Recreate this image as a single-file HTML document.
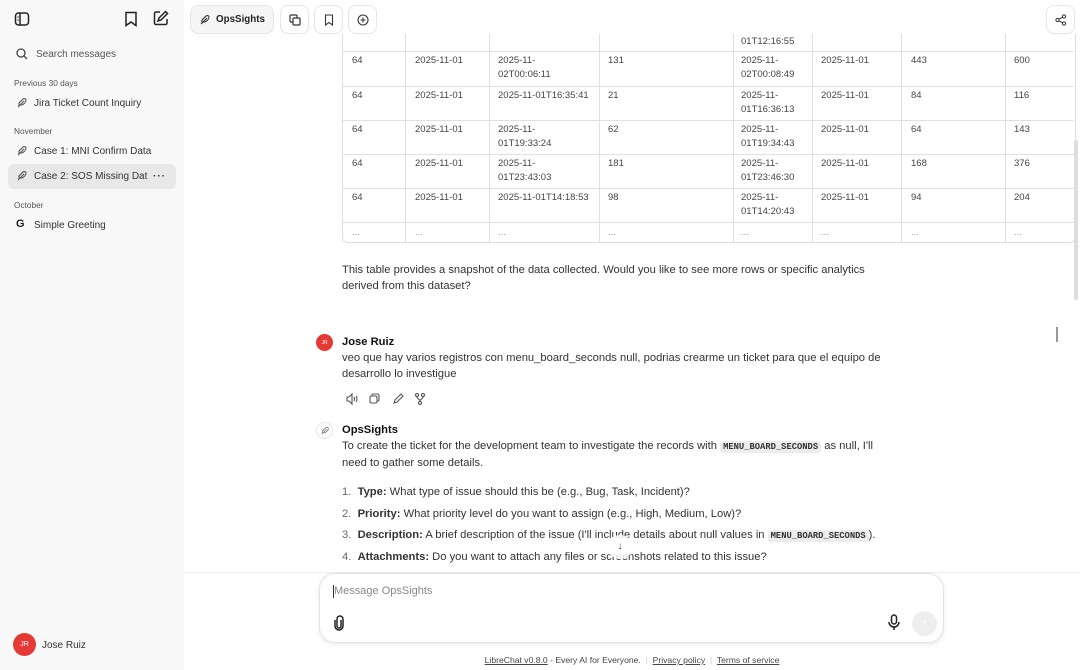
<!DOCTYPE html>
<html><head><meta charset="utf-8"><style>
*{box-sizing:border-box;margin:0;padding:0}
body{width:1080px;height:670px;overflow:hidden;background:#fff;font-family:"Liberation Sans",sans-serif;color:#222;position:relative}
.abs{position:absolute}
#side{left:0;top:0;width:184px;height:670px;background:#f8f8f8}
.lbl{font-size:8.3px;color:#555;position:absolute;left:14px}
.item{position:absolute;left:8px;width:168px;height:25px;font-size:10px;color:#333;display:flex;align-items:center;padding-left:26px;border-radius:6px;white-space:nowrap;overflow:hidden}
.ic{position:absolute;left:8px;top:6px}
.btn{position:absolute;top:5px;height:29px;border:1px solid #e5e5e5;border-radius:8px;background:#fff;display:flex;align-items:center;justify-content:center}
.vl{position:absolute;width:1px;background:#e0e0e0;top:34px;height:208px}
.hl{position:absolute;height:1px;background:#e0e0e0;left:342px;width:732px}
.c{position:absolute;font-size:9.5px;color:#444;line-height:14px}
.t{font-size:11.2px;color:#333;line-height:16px}
code{font-family:"Liberation Mono",monospace;font-size:8.8px;background:#ececec;border-radius:3px;padding:1px 3px;font-weight:bold;color:#333}
</style></head><body>
<div id="side" class="abs">
<svg class="abs" style="left:14px;top:11px" width="16" height="16" viewBox="0 0 16 16" fill="none" stroke="#222" stroke-width="1.5"><rect x="1.5" y="2" width="13" height="12" rx="3"/><line x1="6" y1="2" x2="6" y2="14"/><line x1="3.5" y1="6" x2="4.5" y2="6"/><line x1="3.5" y1="9" x2="4.5" y2="9"/></svg>
<svg class="abs" style="left:124px;top:11px" width="14" height="16" viewBox="0 0 14 16" fill="none" stroke="#222" stroke-width="1.5"><path d="M2 1.5h10v13l-5-3.5-5 3.5z"/></svg>
<svg class="abs" style="left:153px;top:10px" width="16" height="16" viewBox="0 0 16 16" fill="none" stroke="#222" stroke-width="1.5"><path d="M7 2H3a1.5 1.5 0 0 0-1.5 1.5v9.5A1.5 1.5 0 0 0 3 14.5h9.5A1.5 1.5 0 0 0 14 13V9"/><path d="M12.5 1.5l2 2L8 10l-3 1 1-3z"/></svg>
<svg class="abs" style="left:16px;top:48px" width="12" height="12" viewBox="0 0 12 12" fill="none" stroke="#444" stroke-width="1.3"><circle cx="5" cy="5" r="4"/><line x1="8" y1="8" x2="11" y2="11"/></svg>
<div class="abs" style="left:36px;top:49px;font-size:10px;color:#555">Search messages</div>
<div class="lbl" style="top:78px">Previous 30 days</div>
<div class="item" style="top:91px"><svg class="ic" width="12" height="12" viewBox="0 0 12 12" fill="none" stroke="#555" stroke-width="1.1"><path d="M2 10L8 4M3 9V6l4-4c2-1 3 0 3 1 0 2-2 4-4 5H3"/></svg>Jira Ticket Count Inquiry</div>
<div class="lbl" style="top:126px">November</div>
<div class="item" style="top:139px"><svg class="ic" width="12" height="12" viewBox="0 0 12 12" fill="none" stroke="#555" stroke-width="1.1"><path d="M2 10L8 4M3 9V6l4-4c2-1 3 0 3 1 0 2-2 4-4 5H3"/></svg>Case 1: MNI Confirm Data</div>
<div class="item" style="top:164px;background:#e8e8e8"><svg class="ic" width="12" height="12" viewBox="0 0 12 12" fill="none" stroke="#555" stroke-width="1.1"><path d="M2 10L8 4M3 9V6l4-4c2-1 3 0 3 1 0 2-2 4-4 5H3"/></svg>Case 2: SOS Missing Dat<span style="position:absolute;right:10px;font-weight:bold;letter-spacing:1px;background:#e8e8e8;padding-left:4px">···</span></div>
<div class="lbl" style="top:200px">October</div>
<div class="item" style="top:213px"><span class="ic" style="top:5px;left:8px;font-weight:bold;font-size:11px;color:#222">G</span>Simple Greeting</div>
<div class="abs" style="left:13px;top:633px;width:23px;height:23px;border-radius:50%;background:#e53935;color:#fff;font-size:7px;display:flex;align-items:center;justify-content:center">JR</div>
<div class="abs" style="left:42px;top:640px;font-size:10px;color:#333">Jose Ruiz</div>
</div>
<div class="abs" style="left:184px;top:630px;width:28px;height:18px;background:#f7f7f7"></div>

<div class="btn" style="left:190px;width:84px;background:#f5f5f5"><svg width="12" height="12" viewBox="0 0 12 12" fill="none" stroke="#333" stroke-width="1.1"><path d="M2 10L8 4M3 9V6l4-4c2-1 3 0 3 1 0 2-2 4-4 5H3"/></svg><span style="font-size:9.8px;font-weight:bold;margin-left:5px">OpsSights</span></div>
<div class="btn" style="left:280px;width:29px"><svg width="12" height="12" viewBox="0 0 12 12" fill="none" stroke="#333" stroke-width="1.2"><rect x="1" y="1" width="7" height="7" rx="1"/><rect x="4" y="4" width="7" height="7" rx="1" fill="#fff"/></svg></div>
<div class="btn" style="left:314px;width:29px"><svg width="10" height="12" viewBox="0 0 10 12" fill="none" stroke="#333" stroke-width="1.1"><path d="M1.5 1h7v10l-3.5-2.5-3.5 2.5z"/></svg></div>
<div class="btn" style="left:348px;width:29px"><svg width="12" height="12" viewBox="0 0 12 12" fill="none" stroke="#333" stroke-width="1.1"><circle cx="6" cy="6" r="5"/><path d="M6 3.5v5M3.5 6h5"/></svg></div>
<div class="btn" style="left:1046px;width:29px"><svg width="12" height="12" viewBox="0 0 12 12" fill="none" stroke="#333" stroke-width="1"><circle cx="9" cy="2.5" r="1.6"/><circle cx="2.5" cy="6" r="1.6"/><circle cx="9" cy="9.5" r="1.6"/><path d="M4 5.2l3.6-2M4 6.8l3.6 2"/></svg></div>

<!-- table -->
<div class="abs" style="left:342px;top:34px;width:734px;height:209px;border:1px solid #ddd;border-top:none;border-radius:0 0 6px 6px"></div>
<div class="vl" style="left:405px"></div><div class="vl" style="left:489px"></div><div class="vl" style="left:599px"></div><div class="vl" style="left:733px"></div><div class="vl" style="left:812px"></div><div class="vl" style="left:901px"></div><div class="vl" style="left:1005px"></div>
<div class="hl" style="top:51px"></div><div class="hl" style="top:86px"></div><div class="hl" style="top:120px"></div><div class="hl" style="top:154px"></div><div class="hl" style="top:188px"></div><div class="hl" style="top:222px"></div>
<div class="c" style="left:741px;top:35px">01T12:16:55</div>
<div class="c" style="left:352px;top:54px">64</div><div class="c" style="left:415px;top:54px">2025-11-01</div><div class="c" style="left:498px;top:54px">2025-11-<br>02T00:06:11</div><div class="c" style="left:608px;top:54px">131</div><div class="c" style="left:741px;top:54px">2025-11-<br>02T00:08:49</div><div class="c" style="left:821px;top:54px">2025-11-01</div><div class="c" style="left:911px;top:54px">443</div><div class="c" style="left:1014px;top:54px">600</div>
<div class="c" style="left:352px;top:89px">64</div><div class="c" style="left:415px;top:89px">2025-11-01</div><div class="c" style="left:498px;top:89px">2025-11-01T16:35:41</div><div class="c" style="left:608px;top:89px">21</div><div class="c" style="left:741px;top:89px">2025-11-<br>01T16:36:13</div><div class="c" style="left:821px;top:89px">2025-11-01</div><div class="c" style="left:911px;top:89px">84</div><div class="c" style="left:1014px;top:89px">116</div>
<div class="c" style="left:352px;top:123px">64</div><div class="c" style="left:415px;top:123px">2025-11-01</div><div class="c" style="left:498px;top:123px">2025-11-<br>01T19:33:24</div><div class="c" style="left:608px;top:123px">62</div><div class="c" style="left:741px;top:123px">2025-11-<br>01T19:34:43</div><div class="c" style="left:821px;top:123px">2025-11-01</div><div class="c" style="left:911px;top:123px">64</div><div class="c" style="left:1014px;top:123px">143</div>
<div class="c" style="left:352px;top:157px">64</div><div class="c" style="left:415px;top:157px">2025-11-01</div><div class="c" style="left:498px;top:157px">2025-11-<br>01T23:43:03</div><div class="c" style="left:608px;top:157px">181</div><div class="c" style="left:741px;top:157px">2025-11-<br>01T23:46:30</div><div class="c" style="left:821px;top:157px">2025-11-01</div><div class="c" style="left:911px;top:157px">168</div><div class="c" style="left:1014px;top:157px">376</div>
<div class="c" style="left:352px;top:191px">64</div><div class="c" style="left:415px;top:191px">2025-11-01</div><div class="c" style="left:498px;top:191px">2025-11-01T14:18:53</div><div class="c" style="left:608px;top:191px">98</div><div class="c" style="left:741px;top:191px">2025-11-<br>01T14:20:43</div><div class="c" style="left:821px;top:191px">2025-11-01</div><div class="c" style="left:911px;top:191px">94</div><div class="c" style="left:1014px;top:191px">204</div>
<div class="c" style="left:352px;top:226px;color:#999">...</div><div class="c" style="left:415px;top:226px;color:#999">...</div><div class="c" style="left:498px;top:226px;color:#999">...</div><div class="c" style="left:608px;top:226px;color:#999">...</div><div class="c" style="left:741px;top:226px;color:#999">...</div><div class="c" style="left:821px;top:226px;color:#999">...</div><div class="c" style="left:911px;top:226px;color:#999">...</div><div class="c" style="left:1014px;top:226px;color:#999">...</div>
<div class="abs" style="left:1074px;top:140px;width:4px;height:160px;background:#ddd;border-radius:2px"></div>
<div class="abs" style="left:1056px;top:327px;width:2px;height:15px;background:#999"></div>

<div class="abs t" style="left:342px;top:262px;width:550px">This table provides a snapshot of the data collected. Would you like to see more rows or specific analytics derived from this dataset?</div>

<div class="abs" style="left:316px;top:334px;width:17px;height:17px;border-radius:50%;background:#e53935;color:#fff;font-size:5px;display:flex;align-items:center;justify-content:center">JR</div>
<div class="abs t" style="left:342px;top:334px;font-weight:bold;color:#111">Jose Ruiz</div>
<div class="abs t" style="left:342px;top:350px;width:556px">veo que hay varios registros con menu_board_seconds null, podrias crearme un ticket para que el equipo de desarrollo lo investigue</div>
<svg class="abs" style="left:345px;top:392px" width="90" height="14" viewBox="0 0 90 14" fill="none" stroke="#555" stroke-width="1.1"><path d="M2 5h2l3-3v10l-3-3H2zM9 5q1 2 0 4M11 4q2 3 0 6"/><rect x="25" y="4" width="7" height="7" rx="1.5"/><path d="M27 4V3a1 1 0 0 1 1-1h5a1 1 0 0 1 1 1v5a1 1 0 0 1-1 1h-1"/><path d="M49 11l1-3 6-6 2 2-6 6z"/><circle cx="72" cy="3" r="1.5"/><circle cx="78" cy="3" r="1.5"/><circle cx="75" cy="11" r="1.5"/><path d="M72 4.5v1l3 3v1M78 4.5v1l-3 3"/></svg>

<div class="abs" style="left:316px;top:422px;width:17px;height:17px;border-radius:50%;border:1px solid #e5e5e5;display:flex;align-items:center;justify-content:center"><svg width="10" height="10" viewBox="0 0 12 12" fill="none" stroke="#888" stroke-width="1.1"><path d="M2 10L8 4M3 9V6l4-4c2-1 3 0 3 1 0 2-2 4-4 5H3"/></svg></div>
<div class="abs t" style="left:342px;top:422px;font-weight:bold;color:#111">OpsSights</div>
<div class="abs t" style="left:342px;top:438px;width:556px">To create the ticket for the development team to investigate the records with <code>MENU_BOARD_SECONDS</code> as null, I'll need to gather some details.</div>
<div class="abs t" style="left:342px;top:484px;white-space:nowrap"><span style="color:#666">1.</span>&nbsp; <b>Type:</b> What type of issue should this be (e.g., Bug, Task, Incident)?</div>
<div class="abs t" style="left:342px;top:506px;white-space:nowrap"><span style="color:#666">2.</span>&nbsp; <b>Priority:</b> What priority level do you want to assign (e.g., High, Medium, Low)?</div>
<div class="abs t" style="left:342px;top:527px;white-space:nowrap"><span style="color:#666">3.</span>&nbsp; <b>Description:</b> A brief description of the issue (I'll include details about null values in <code>MENU_BOARD_SECONDS</code>).</div>
<div class="abs t" style="left:342px;top:549px;white-space:nowrap"><span style="color:#666">4.</span>&nbsp; <b>Attachments:</b> Do you want to attach any files or screenshots related to this issue?</div>
<div class="abs" style="left:607px;top:535px;width:26px;height:24px;border-radius:50%;background:rgba(255,255,255,.85);font-size:10px;text-align:center;line-height:24px;color:#333">↓</div>

<div class="abs" style="left:184px;top:572px;width:896px;height:98px;background:#fff;border-top:1px solid #eee"></div>
<div class="abs" style="left:319px;top:573px;width:625px;height:70px;border:1px solid #e3e3e3;border-radius:16px;background:#fff;box-shadow:0 2px 6px rgba(0,0,0,.08)"></div>
<div class="abs" style="left:333px;top:585px;width:1px;height:13px;background:#333"></div>
<div class="abs" style="left:334px;top:585px;font-size:11px;color:#888">Message OpsSights</div>
<svg class="abs" style="left:333px;top:615px" width="12" height="16" viewBox="0 0 12 16" fill="none" stroke="#222" stroke-width="1.5"><path d="M8 5v6a2 2 0 0 1-4 0V4a3 3 0 0 1 6 0v7a4 4 0 0 1-8 0V5"/></svg>
<svg class="abs" style="left:887px;top:614px" width="14" height="17" viewBox="0 0 14 17" fill="none" stroke="#222" stroke-width="1.5"><rect x="4.5" y="1" width="5" height="9" rx="2.5"/><path d="M2 8a5 5 0 0 0 10 0M7 13v3"/></svg>
<div class="abs" style="left:912px;top:611px;width:25px;height:25px;border-radius:50%;background:#eee;color:#fff;font-size:11px;text-align:center;line-height:25px">↑</div>
<div class="abs" style="left:184px;top:655px;width:896px;text-align:center;font-size:8.6px;color:#444"><u>LibreChat v0.8.0</u> - Every AI for Everyone. <span style="color:#ccc">&nbsp;|&nbsp;</span> <u>Privacy policy</u> <span style="color:#ccc">&nbsp;|&nbsp;</span> <u>Terms of service</u></div>
</body></html>
